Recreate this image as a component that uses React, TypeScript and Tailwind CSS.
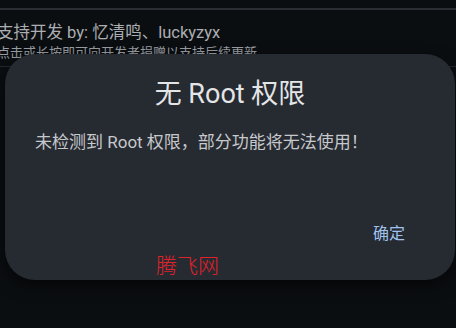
import React from "react";

export default function App() {
  const font = { fontFamily: 'Roboto, "Noto Sans CJK SC", sans-serif' } as React.CSSProperties;
  return (
    <div className="relative w-[456px] h-[328px] overflow-hidden bg-[#0b0e11]" style={font}>
      <div className="pt-[8px]">
        <div className="h-[2px] bg-[#2a2e33]" />
        <div className="ml-[-3px] mt-[12px] text-[16.5px] leading-[22px] text-[#abaeb2]">
          支持开发 by: 忆清鸣、luckyzyx
        </div>
        <div className="ml-[-3px] text-[13px] leading-[18px] text-[#9a9ea3]">
          点击或长按即可向开发者捐赠以支持后续更新
        </div>
        <div className="mt-[4px] h-[1px] bg-[#25292e]" />
      </div>

      <div className="absolute left-[5px] top-[54px] w-[450px] h-[226px] rounded-[30px] bg-[#262a31] shadow-[0_6px_16px_rgba(0,0,0,0.6)] flex flex-col">
        <div className="pt-[22px] text-center text-[27px] leading-[36px] text-[#e4e5e7]">
          无 Root 权限
        </div>
        <div className="mt-[18px] px-[30px] text-[17px] leading-[24px] text-[#c6c8cc]">
          未检测到 Root 权限，部分功能将无法使用！
        </div>
        <div className="mt-[69px] flex justify-end pr-[50px]">
          <span className="text-[16px] leading-[22px] text-[#a0c3ee]">确定</span>
        </div>
      </div>

      <div className="absolute left-[156px] top-[253px] text-[21px] leading-[26px] font-light text-[#e0222b]">
        腾飞网
      </div>
    </div>
  );
}
